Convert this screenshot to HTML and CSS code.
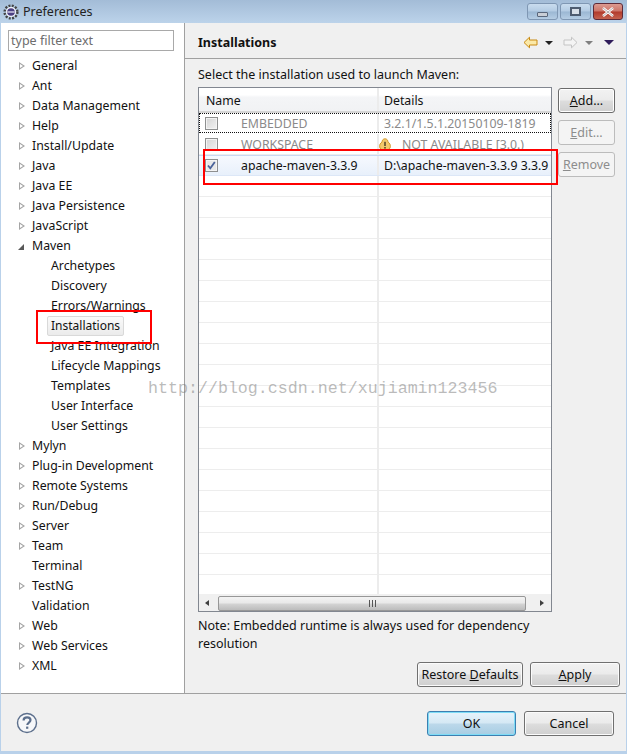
FILE: index.html
```html
<!DOCTYPE html>
<html lang="en">
<head>
<meta charset="utf-8">
<title>Preferences</title>
<link rel="stylesheet" href="styles.css">
</head>
<body>
<div class="window">
  <header class="titlebar">
    <div class="title">
      <svg class="app-icon" width="16" height="16" viewBox="0 0 16 16"><circle cx="8" cy="8" r="6.4" fill="none" stroke="#444" stroke-width="2.4" stroke-dasharray="2 1.35"/><circle cx="8" cy="8" r="5" fill="#f4f4f8"/><circle cx="8" cy="8" r="3.8" fill="#4b3f82"/><rect x="4.4" y="7.3" width="7.2" height="1.4" fill="#d8d4ea"/></svg>
      <span>Preferences</span>
    </div>
    <div class="win-buttons">
      <div class="win-btn"><span class="min-glyph"></span></div>
      <div class="win-btn"><span class="max-glyph"></span></div>
      <div class="win-btn close"><svg width="14" height="10" viewBox="0 0 14 10"><path d="M2 1l10 8M12 1L2 9" stroke="#fff" stroke-width="2.6" fill="none"/><path d="M2 1l10 8M12 1L2 9" stroke="#6b5a60" stroke-width=".5" fill="none"/></svg></div>
    </div>
  </header>
  <div class="content">
    <aside class="sidebar">
      <div class="filter">type filter text</div>
      <ul class="tree">
        <li><i class="tw"></i>General</li>
        <li><i class="tw"></i>Ant</li>
        <li><i class="tw"></i>Data Management</li>
        <li><i class="tw"></i>Help</li>
        <li><i class="tw"></i>Install/Update</li>
        <li><i class="tw"></i>Java</li>
        <li><i class="tw"></i>Java EE</li>
        <li><i class="tw"></i>Java Persistence</li>
        <li><i class="tw"></i>JavaScript</li>
        <li><i class="tw open"></i>Maven</li>
        <li class="sub">Archetypes</li>
        <li class="sub">Discovery</li>
        <li class="sub">Errors/Warnings</li>
        <li class="sub"><span class="selected">Installations</span></li>
        <li class="sub">Java EE Integration</li>
        <li class="sub">Lifecycle Mappings</li>
        <li class="sub">Templates</li>
        <li class="sub">User Interface</li>
        <li class="sub">User Settings</li>
        <li><i class="tw"></i>Mylyn</li>
        <li><i class="tw"></i>Plug-in Development</li>
        <li><i class="tw"></i>Remote Systems</li>
        <li><i class="tw"></i>Run/Debug</li>
        <li><i class="tw"></i>Server</li>
        <li><i class="tw"></i>Team</li>
        <li class="leaf">Terminal</li>
        <li><i class="tw"></i>TestNG</li>
        <li class="leaf">Validation</li>
        <li><i class="tw"></i>Web</li>
        <li><i class="tw"></i>Web Services</li>
        <li><i class="tw"></i>XML</li>
      </ul>
    </aside>
    <main class="main">
      <div class="page-head">
        <h1>Installations</h1>
        <div class="nav">
          <svg width="15" height="13" viewBox="0 0 15 13"><path d="M1 6.500L6.500 1.200v2.800h7.500v5H6.500v2.800z" fill="#fbe9a8" stroke="#c98a12"/></svg>
          <i class="drop"></i>
          <svg class="fwd" width="15" height="13" viewBox="0 0 15 13"><path d="M14 6.500L8.500 1.200v2.800H1v5h7.500v2.800z" fill="#f4f4f4" stroke="#c4c4c4"/></svg>
          <i class="drop dim"></i>
          <i class="drop menu"></i>
        </div>
      </div>
      <div class="body">
        <p class="lead">Select the installation used to launch Maven:</p>
        <div class="table-row">
          <div class="table">
            <div class="thead"><div class="c1">Name</div><div class="c2">Details</div></div>
            <div class="row dim focus"><div class="c1"><i class="check"></i><span class="name">EMBEDDED</span></div><div class="c2">3.2.1/1.5.1.20150109-1819</div></div>
            <div class="row dim"><div class="c1"><i class="check"></i><span class="name">WORKSPACE</span></div><div class="c2 warn"><svg width="12" height="13" viewBox="0 0 12 13"><path d="M6 .8c2 0 3 1.600 3 3.400 1.800.8 2.400 2.600 2.400 4.300 0 2.400-2.400 3.700-5.400 3.700S.6 10.900.6 8.500c0-1.700.6-3.500 2.400-4.300C3 2.400 4 .8 6 .8z" fill="#f3c86a" stroke="#d49a2f"/><rect x="5.200" y="3.800" width="1.600" height="4.200" fill="#5a4a2a"/><rect x="5.200" y="9" width="1.600" height="1.600" fill="#5a4a2a"/></svg><span>NOT AVAILABLE [3.0.)</span></div></div>
            <div class="row sel"><div class="c1"><i class="check on"><svg width="11" height="11" viewBox="0 0 11 11"><path d="M2 5.500l2.300 2.800L8.800 2" fill="none" stroke="#4a6299" stroke-width="1.800"/></svg></i><span class="name">apache-maven-3.3.9</span></div><div class="c2">D:\apache-maven-3.3.9 3.3.9</div></div>
            <div class="empty"></div>
            <div class="hscroll">
              <i class="arr left"></i>
              <div class="thumb"><span class="grip"></span></div>
              <i class="arr right"></i>
            </div>
          </div>
          <div class="side-btns">
            <button class="btn strong"><span><u>A</u>dd...</span></button>
            <button class="btn off"><span><u>E</u>dit...</span></button>
            <button class="btn off"><span><u>R</u>emove</span></button>
          </div>
        </div>
        <p class="note">Note: Embedded runtime is always used for dependency resolution</p>
        <div class="page-btns">
          <button class="btn restore">Restore <u>D</u>efaults</button>
          <button class="btn apply"><u>A</u>pply</button>
        </div>
      </div>
    </main>
  </div>
  <footer class="footer">
    <svg class="help" width="22" height="22" viewBox="0 0 22 22"><circle cx="11" cy="11" r="9.500" fill="#f6f7f9" stroke="#5c6f8c" stroke-width="1.400"/><path d="M7.600 8.400c0-2 1.500-3.100 3.500-3.100s3.400 1.100 3.400 2.800c0 2.500-3.200 2.500-3.200 5" fill="none" stroke="#5c6f8c" stroke-width="2.200"/><rect x="10.100" y="14.600" width="2.200" height="2.200" fill="#5c6f8c"/></svg>
    <div class="foot-btns">
      <button class="btn ok">OK</button>
      <button class="btn cancel">Cancel</button>
    </div>
  </footer>
</div>
<div class="mark mark-tree"></div>
<div class="mark mark-row"></div>
<div class="watermark">http://blog.csdn.net/xujiamin123456</div>
</body>
</html>
```
FILE: styles.css
```css
* { box-sizing: border-box; }
html, body { margin: 0; padding: 0; }
body { width: 627px; height: 754px; position: relative; overflow: hidden; font: 12.5px/17px "Noto Sans", sans-serif; color: #111; background: #b9d1ea; }
.window { display: flex; flex-direction: column; width: 627px; height: 754px; padding: 0 1px 3px 1px; background: #b9d1ea; }
.titlebar { height: 23px; flex: none; display: flex; justify-content: space-between; margin: 0 -1px; padding: 0 4px 0 3px; background: linear-gradient(#a3bcd7, #bcd3ea); }
.title { display: flex; align-items: center; gap: 4px; font-size: 12.5px; color: #222; }
.app-icon { flex: none; }
.win-buttons { display: flex; gap: 2px; padding-top: 3px; height: 20px; }
.win-btn { width: 31px; height: 17px; border: 1px solid #7f97b3; border-radius: 3px; background: linear-gradient(#c9dcee 0, #b3cbe3 48%, #9bb7d3 52%, #b5cde4 100%); display: flex; align-items: center; justify-content: center; }
.win-btn.close { width: 30px; border-color: #5e2a38; background: linear-gradient(#dc9a90 0, #cc7468 48%, #b23a2c 52%, #c4614f 100%); }
.min-glyph { width: 11px; height: 5px; margin-top: 5px; background: #c9ced6; border: 1px solid #59667a; border-radius: 1px; }
.max-glyph { width: 11px; height: 9px; background: #d8dfe8; border: 2px solid #4e5c70; }
.content { flex: 1; display: flex; min-height: 0; border-bottom: 1px solid #a0a0a0; }
.sidebar { width: 184px; flex: none; background: #fff; border-right: 1px solid #a0a0a0; padding: 7px 0 0 7px; }
.filter { width: 166px; height: 21px; border: 1px solid #a9a9a9; padding-left: 2px; line-height: 19px; color: #6d6d6d; font-size: 12.5px; }
.tree { list-style: none; margin: 5px 0 0; padding: 0; font-size: 12.3px; }
.tree li { height: 20px; line-height: 20px; padding-left: 24px; display: flex; align-items: center; white-space: nowrap; position: relative; }
.tree li.sub { padding-left: 43px; }
.tw { position: absolute; left: 11px; top: 6px; width: 0; height: 0; border-left: 6px solid #a5a5a5; border-top: 4.500px solid transparent; border-bottom: 4.500px solid transparent; }
.tw::after { content: ""; position: absolute; left: -5px; top: -2.500px; border-left: 3px solid #fff; border-top: 2.500px solid transparent; border-bottom: 2.500px solid transparent; }
.tw.open { left: 10px; top: 8px; border: 0; border-right: 6px solid #595959; border-top: 6px solid transparent; }
.tw.open::after { display: none; }
.selected { display: inline-block; height: 20px; line-height: 18px; margin-left: -4px; padding: 0 3px; border: 1px solid #d9d9d9; border-radius: 2px; background: linear-gradient(#fafafa, #ebebeb); font-size: 12px; }
.main { flex: 1; min-width: 0; background: #f0f0f0; display: flex; flex-direction: column; }
.page-head { height: 36px; flex: none; border-bottom: 1px solid #a0a0a0; display: flex; align-items: center; justify-content: space-between; padding: 3px 12px 0 13px; }
.page-head h1 { margin: 0; font-size: 12.5px; font-weight: 700; }
.nav { display: flex; align-items: center; }
.drop { display: block; width: 0; height: 0; margin: 1px 10px 0 7px; border-top: 4px solid #222; border-left: 4px solid transparent; border-right: 4px solid transparent; }
.drop.dim { border-top-color: #808080; margin-right: 11px; }
.drop.menu { border-top-color: #2f1c5a; margin: 1px 0 0 0; border-left-width: 5px; border-right-width: 5px; border-top-width: 5px; }
.fwd { margin-left: 0; }
.body { flex: 1; min-height: 0; display: flex; flex-direction: column; padding: 6px 6px 6px 13px; }
.lead { margin: 0 0 2px; height: 20px; line-height: 19px; }
.table-row { display: flex; gap: 6px; align-items: flex-start; flex: none; }
.table { width: 354px; height: 525px; flex: none; display: flex; flex-direction: column; background: #fff; border: 1px solid #828790; font-size: 12.3px; }
.thead { height: 25px; flex: none; display: flex; background: linear-gradient(#fff 0, #fff 30%, #f4f5f7 40%, #f1f2f4 100%); border-bottom: 2px solid #d5d5d5; }
.thead .c1, .thead .c2 { padding-top: 2px; }
.c1 { width: 178px; flex: none; padding-left: 6px; white-space: nowrap; display: flex; align-items: center; }
.thead .c1 { padding-left: 7px; }
.c2 { flex: 1; min-width: 0; padding-left: 5px; border-left: 2px solid #ececec; white-space: nowrap; display: flex; align-items: center; overflow: hidden; }
.row { height: 21px; flex: none; display: flex; border-bottom: 1px solid #ededed; }
.row.dim { color: #8a8a8a; }
.row.focus { outline: 1px dotted #111; outline-offset: -1px; height: 20px; margin-bottom: 1px; border-bottom: 0; }
.row.sel { background: linear-gradient(#f6f9fe, #e8f0fb); border-top: 1px solid #c8d8f2; border-bottom: 1px solid #dce7f7; }
.check { display: block; width: 13px; height: 13px; flex: none; border: 1px solid #8e8f8f; background: linear-gradient(135deg, #d4d4d4, #f2f2f2); box-shadow: inset 0 0 0 1px #f4f4f4; margin-right: 23px; position: relative; }
.check.on { background: #e8e8e8; }
.check svg { position: absolute; left: 0; top: 0; }
.warn span { margin-left: 11px; }
.warn svg { margin-left: -5px; flex: none; }
.empty { flex: 1; min-height: 0; background: repeating-linear-gradient(#fff 0, #fff 20px, #ededed 20px, #ededed 21px); position: relative; }
.empty::after { content: ""; position: absolute; left: 178px; top: 0; bottom: 0; width: 2px; background: #ececec; }
.hscroll { height: 17px; flex: none; display: flex; align-items: center; background: #f0f0f0; padding: 0 7px 0 6px; border-top: 1px solid #f0f0f0; }
.arr { display: block; width: 0; height: 0; border-top: 3.500px solid transparent; border-bottom: 3.500px solid transparent; flex: none; }
.arr.left { border-right: 4px solid #404040; }
.arr.right { border-left: 4px solid #404040; }
.thumb { flex: 1; height: 15px; margin: 0 14px 0 9px; border: 1px solid #979797; border-radius: 2px; background: linear-gradient(#f3f3f3 0, #e8e8e8 48%, #d4d4d4 52%, #bcbcbc 100%); display: flex; align-items: center; justify-content: center; }
.grip { width: 7px; height: 7px; background: repeating-linear-gradient(90deg, #555 0, #555 1px, transparent 1px, transparent 3px); }
.side-btns { display: flex; flex-direction: column; gap: 7px; padding-top: 1px; }
.btn { display: block; padding: 0; font: inherit; color: #111; border: 1px solid #707070; border-radius: 3px; background: linear-gradient(#f2f2f2 0, #ebebeb 48%, #dddddd 52%, #cfcfcf 100%); box-shadow: inset 0 0 0 1px #fbfbfb; }
.side-btns .btn { width: 57px; height: 25px; }
.btn.strong { border-color: #6b6b6b; box-shadow: inset 0 0 0 1px #fff; }
.btn.off { color: #8d8d8d; background: #f4f4f4; border-color: #bcbcbc; box-shadow: none; }
.btn u { text-underline-offset: 1px; }
.note { margin: 5px 0 0; width: 350px; line-height: 18px; height: 36px; flex: none; }
.page-btns { margin-top: auto; display: flex; justify-content: flex-end; gap: 7px; }
.restore { width: 106px; height: 25px; }
.apply { width: 90px; height: 25px; }
.footer { height: 57px; flex: none; background: #f0f0f0; display: flex; justify-content: space-between; align-items: flex-start; padding: 17px 12px 0 15px; }
.help { margin-top: 1px; }
.foot-btns { display: flex; gap: 8px; }
.ok { width: 89px; height: 25px; border-color: #3c7fb1; background: linear-gradient(#e6f3fb 0, #d5e8f4 48%, #bcd8ea 52%, #a7cde3 100%); box-shadow: inset 0 0 0 1px #7edcf6; }
.cancel { width: 90px; height: 25px; }
.mark { position: absolute; border: 2px solid #f00; }
.mark-tree { left: 36px; top: 310px; width: 116px; height: 34px; }
.mark-row { left: 203px; top: 149px; width: 355px; height: 36px; }
.watermark { position: absolute; left: 148px; top: 379px; font: 16.650px/20px "Liberation Mono", monospace; color: rgba(120,120,120,.5); white-space: nowrap; }
```
